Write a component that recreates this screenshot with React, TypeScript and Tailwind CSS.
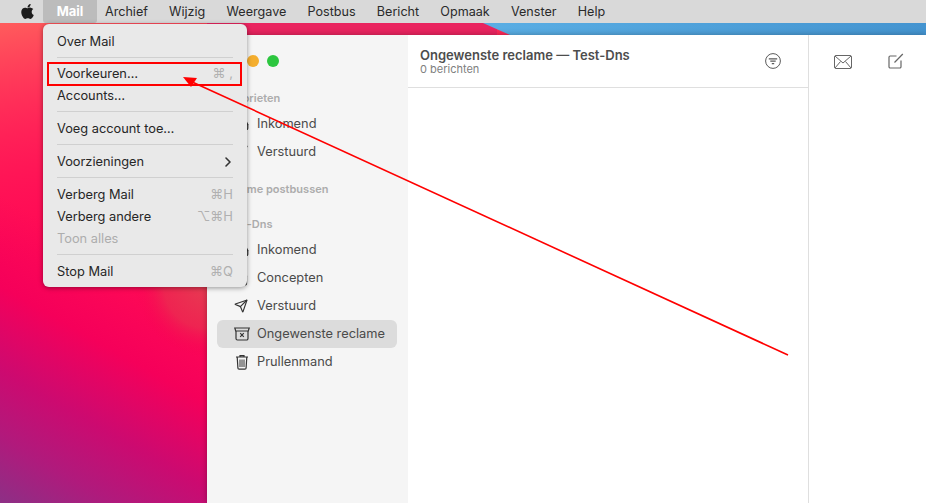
import { Inbox, Send, File, ChevronRight } from "lucide-react";
import { FaApple } from "react-icons/fa";

const menuBarItems = ["Archief", "Wijzig", "Weergave", "Postbus", "Bericht", "Opmaak", "Venster", "Help"];

function MenuRow({ label, shortcut, disabled, children }: { label: string; shortcut?: string; disabled?: boolean; children?: React.ReactNode }) {
  return (
    <div className={`flex h-[22px] items-center justify-between pl-[14px] pr-[14px] pt-px text-[12.8px] ${disabled ? "text-[#adadad]" : "text-[#262626]"}`}>
      <span>{label}</span>
      {shortcut && <span className="text-[13px] text-[#b0b0b0]">{shortcut}</span>}
      {children}
    </div>
  );
}

function MenuSep({ tall }: { tall?: boolean }) {
  return (
    <div className={`flex items-center px-[14px] ${tall ? "h-[11px]" : "h-[10px]"}`}>
      <div className="h-px w-full bg-[#d0d0d0]" />
    </div>
  );
}

function JunkIcon() {
  return (
    <svg width="16" height="14" viewBox="0 0 16 14" fill="none" stroke="#333" strokeWidth="1.2">
      <path d="M0.8 1h14.4l-.9 3H1.7z" />
      <path d="M2 4v7.5a1.5 1.5 0 0 0 1.5 1.5h9a1.5 1.5 0 0 0 1.5-1.5V4" />
      <path d="M6.2 6.2l3.6 3.6M9.8 6.2l-3.6 3.6" />
    </svg>
  );
}

function TrashIcon() {
  return (
    <svg width="14" height="16" viewBox="0 0 14 16" fill="none" stroke="#333" strokeWidth="1.2">
      <path d="M1 3h12M5 3V1.6h4V3" />
      <path d="M2.2 3l.7 11a1.2 1.2 0 0 0 1.2 1.2h5.8a1.2 1.2 0 0 0 1.2-1.2l.7-11" />
      <path d="M5 5.5v7.5M7 5.5v7.5M9 5.5v7.5" strokeWidth="1" />
    </svg>
  );
}

function SideRow({ icon, label, active }: { icon: React.ReactNode; label: string; active?: boolean }) {
  return (
    <div className={`flex h-[28px] items-center rounded-md pl-[17px] text-[12.8px] text-[#4a4a4a] ${active ? "bg-[#dcdcdc]" : ""}`}>
      <span className="flex w-[23px] justify-start">{icon}</span>
      <span>{label}</span>
    </div>
  );
}

function SideHeading({ label, className }: { label: string; className: string }) {
  return <div className={`pl-[7px] text-[11px] font-semibold leading-[14px] text-[#acacac] ${className}`}>{label}</div>;
}

export default function App() {
  return (
    <div className="relative h-[503px] w-[926px] overflow-hidden font-['Inter',sans-serif]">
      {/* wallpaper */}
      <svg className="absolute inset-0" width="926" height="503" viewBox="0 0 926 503">
        <defs>
          <linearGradient id="wall" gradientUnits="userSpaceOnUse" x1="150" y1="280" x2="20" y2="510">
            <stop offset="0" stopColor="#ff0a55" />
            <stop offset="0.3" stopColor="#f5005a" />
            <stop offset="0.58" stopColor="#cc0a70" />
            <stop offset="0.8" stopColor="#b01a7c" />
            <stop offset="1" stopColor="#8f2e85" />
          </linearGradient>
          <linearGradient id="top" gradientUnits="userSpaceOnUse" x1="0" y1="23" x2="40" y2="260">
            <stop offset="0" stopColor="#ff5c5c" />
            <stop offset="1" stopColor="#ff0a55" stopOpacity="0" />
          </linearGradient>
          <radialGradient id="coral" gradientUnits="userSpaceOnUse" cx="207" cy="285" r="72">
            <stop offset="0" stopColor="#e63c52" />
            <stop offset="0.6" stopColor="#e8304f" stopOpacity="0.7" />
            <stop offset="1" stopColor="#f5004f" stopOpacity="0" />
          </radialGradient>
          <linearGradient id="sky" x1="0" y1="0" x2="1" y2="0">
            <stop offset="0" stopColor="#5aaee4" />
            <stop offset="1" stopColor="#4494d0" />
          </linearGradient>
        </defs>
        <rect width="926" height="503" fill="url(#wall)" />
        <rect width="926" height="503" fill="url(#top)" />
        <rect x="130" y="280" width="80" height="80" fill="url(#coral)" />
        <rect x="207" y="23" width="290" height="12" fill="#e9245f" />
        <polygon points="483,23 926,23 926,35 510,35" fill="url(#sky)" />
      </svg>

      {/* menu bar */}
      <div className="relative flex h-[23px] items-center bg-[#d9d9d9] text-[12.6px] text-[#2a2a2a]">
        <div className="flex w-[43px] justify-end pr-[7px]">
          <FaApple className="text-[17px] text-[#1c1c1c]" />
        </div>
        <div className="flex h-[23px] w-[54px] items-center justify-center rounded-b-[3px] bg-[#bcbcbc] text-[13px] font-bold text-white">Mail</div>
        <div className="ml-[8px] flex gap-[21.2px] pt-px">
          {menuBarItems.map((item) => (
            <span key={item}>{item}</span>
          ))}
        </div>
      </div>

      {/* mail window */}
      <div className="relative ml-[207px] mt-[12px] flex h-[468px] bg-white shadow-[0_0_6px_rgba(0,0,0,0.3)]">
        <div className="w-[201px] bg-[#f5f5f5] pl-[10px] pr-[11px]">
          <div className="flex gap-[8px] pl-[10px] pt-[20px]">
            <span className="size-[12px] rounded-full bg-[#fe5f57]" />
            <span className="size-[12px] rounded-full bg-[#f4ae2e]" />
            <span className="size-[12px] rounded-full bg-[#2cc63f]" />
          </div>
          <SideHeading label="Favorieten" className="mt-[24px]" />
          <div className="mt-[5px]">
            <SideRow icon={<Inbox size={15} color="#333" />} label="Inkomend" />
            <SideRow icon={<Send size={14} color="#333" />} label="Verstuurd" />
          </div>
          <SideHeading label="Slimme postbussen" className="mt-[16px]" />
          <SideHeading label="Test-Dns" className="mt-[21px]" />
          <div className="mt-[5px]">
            <SideRow icon={<Inbox size={15} color="#333" />} label="Inkomend" />
            <SideRow icon={<File size={15} color="#333" />} label="Concepten" />
            <SideRow icon={<Send size={14} color="#333" />} label="Verstuurd" />
            <SideRow icon={<JunkIcon />} label="Ongewenste reclame" active />
            <SideRow icon={<span className="pl-[1px]"><TrashIcon /></span>} label="Prullenmand" />
          </div>
        </div>

        <div className="w-[401px] border-r border-[#dfdfdf]">
          <div className="flex h-[53px] items-center justify-between border-b border-[#dfdfdf] pl-[12px] pr-[27px]">
            <div>
              <div className="text-[13px] font-semibold leading-[16px] text-[#4d4d4d]">Ongewenste reclame — Test-Dns</div>
              <div className="text-[11px] leading-[13px] text-[#808080]">0 berichten</div>
            </div>
            <svg width="16" height="16" viewBox="0 0 16 16" fill="none" stroke="#5a5a5a" strokeWidth="1">
              <circle cx="8" cy="8" r="7.4" />
              <path d="M3.8 5.8h8.4M5.3 8.2h5.4M6.8 10.6h2.4" strokeWidth="1.2" />
            </svg>
          </div>
        </div>

        <div className="flex h-[53px] flex-1 items-center gap-[36px] pl-[25px]">
          <svg width="18" height="14" viewBox="0 0 18 14" fill="none" stroke="#666" strokeWidth="1">
            <rect x="0.5" y="0.5" width="17" height="13" rx="1.5" />
            <path d="M1 1l8 7 8-7M1 13l5.5-6.5M17 13l-5.5-6.5" />
          </svg>
          <svg className="-mt-[2px]" width="16" height="16" viewBox="0 0 16 16" fill="none" stroke="#666" strokeWidth="1.2">
            <path d="M8.5 3H2.2A1.2 1.2 0 0 0 1 4.2v9.6A1.2 1.2 0 0 0 2.2 15h9.6a1.2 1.2 0 0 0 1.2-1.2V7.5" />
            <path d="M6.5 9.5L14.8 1" />
          </svg>
        </div>
      </div>

      {/* open Mail menu */}
      <div className="absolute left-[43px] top-[24px] w-[204px] rounded-[6px] bg-[#e9e9e9] pb-[5px] pt-[6px] shadow-[0_1px_5px_rgba(0,0,0,0.4)]">
        <MenuRow label="Over Mail" />
        <MenuSep />
        <MenuRow label="Voorkeuren…" shortcut="⌘ ," />
        <MenuRow label="Accounts…" />
        <MenuSep tall />
        <MenuRow label="Voeg account toe…" />
        <MenuSep tall />
        <MenuRow label="Voorzieningen">
          <ChevronRight className="-mr-[3px]" size={16} strokeWidth={2.4} color="#333" />
        </MenuRow>
        <MenuSep tall />
        <MenuRow label="Verberg Mail" shortcut="⌘H" />
        <MenuRow label="Verberg andere" shortcut="⌥⌘H" />
        <MenuRow label="Toon alles" disabled />
        <MenuSep tall />
        <MenuRow label="Stop Mail" shortcut="⌘Q" />
      </div>

      {/* annotation */}
      <div className="absolute left-[47px] top-[62px] h-[24px] w-[195px] border-2 border-[#f00]" />
      <svg className="absolute inset-0" width="926" height="503" viewBox="0 0 926 503">
        <line x1="788" y1="355" x2="190" y2="81" stroke="#f00" strokeWidth="1.6" />
        <polygon points="183,77 197,78 191,87" fill="#f00" />
      </svg>
    </div>
  );
}
